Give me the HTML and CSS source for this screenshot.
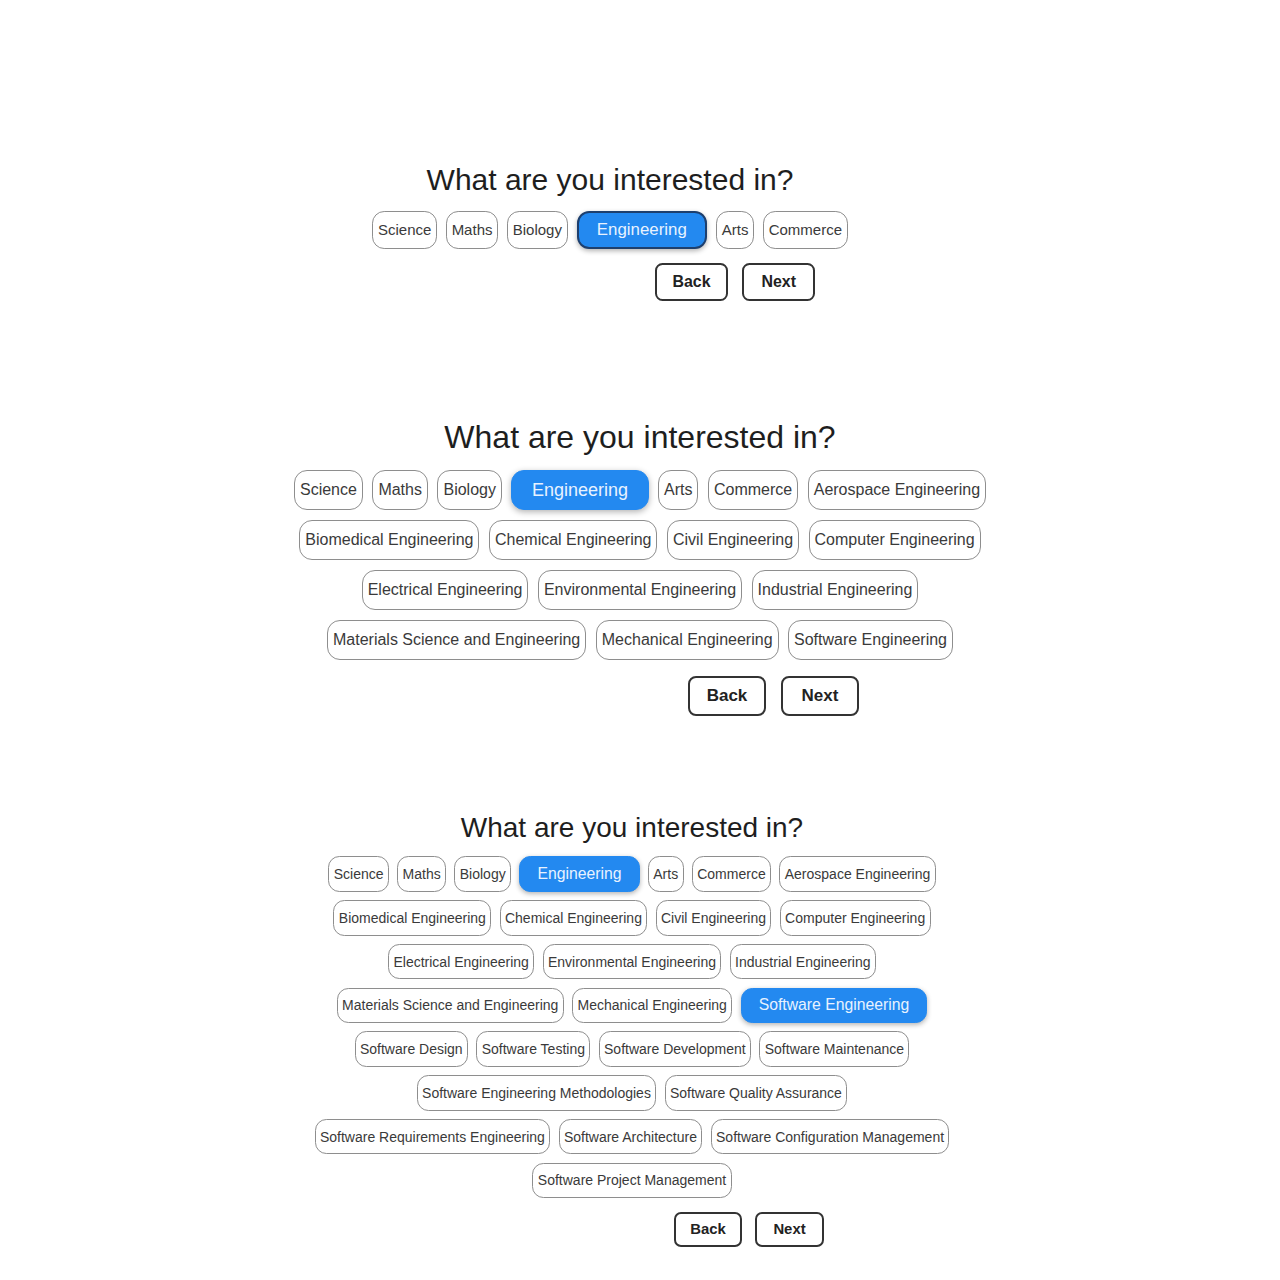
FILE: index.html
```html
<!DOCTYPE html>
<html lang="en">
<head>
<meta charset="utf-8">
<title>Interests</title>
<link rel="stylesheet" href="styles.css">
</head>
<body>
<section class="step step-1">
  <h2 class="title">What are you interested in?</h2>
  <div class="chips">
    <span class="chip">Science</span>
    <span class="chip">Maths</span>
    <span class="chip">Biology</span>
    <span class="chip selected focused">Engineering</span>
    <span class="chip">Arts</span>
    <span class="chip">Commerce</span>
  </div>
  <div class="actions">
    <button class="btn">Back</button>
    <button class="btn">Next</button>
  </div>
</section>

<section class="step step-2">
  <h2 class="title">What are you interested in?</h2>
  <div class="chips">
    <span class="chip">Science</span>
    <span class="chip">Maths</span>
    <span class="chip">Biology</span>
    <span class="chip selected">Engineering</span>
    <span class="chip">Arts</span>
    <span class="chip">Commerce</span>
    <span class="chip">Aerospace Engineering</span>
    <span class="chip">Biomedical Engineering</span>
    <span class="chip">Chemical Engineering</span>
    <span class="chip">Civil Engineering</span>
    <span class="chip">Computer Engineering</span>
    <span class="chip">Electrical Engineering</span>
    <span class="chip">Environmental Engineering</span>
    <span class="chip">Industrial Engineering</span>
    <span class="chip">Materials Science and Engineering</span>
    <span class="chip">Mechanical Engineering</span>
    <span class="chip">Software Engineering</span>
  </div>
  <div class="actions">
    <button class="btn">Back</button>
    <button class="btn">Next</button>
  </div>
</section>

<section class="step step-3">
  <h2 class="title">What are you interested in?</h2>
  <div class="chips">
    <span class="chip">Science</span>
    <span class="chip">Maths</span>
    <span class="chip">Biology</span>
    <span class="chip selected">Engineering</span>
    <span class="chip">Arts</span>
    <span class="chip">Commerce</span>
    <span class="chip">Aerospace Engineering</span>
    <span class="chip">Biomedical Engineering</span>
    <span class="chip">Chemical Engineering</span>
    <span class="chip">Civil Engineering</span>
    <span class="chip">Computer Engineering</span>
    <span class="chip">Electrical Engineering</span>
    <span class="chip">Environmental Engineering</span>
    <span class="chip">Industrial Engineering</span>
    <span class="chip">Materials Science and Engineering</span>
    <span class="chip">Mechanical Engineering</span>
    <span class="chip selected">Software Engineering</span>
    <span class="chip">Software Design</span>
    <span class="chip">Software Testing</span>
    <span class="chip">Software Development</span>
    <span class="chip">Software Maintenance</span>
    <span class="chip">Software Engineering Methodologies</span>
    <span class="chip">Software Quality Assurance</span>
    <span class="chip">Software Requirements Engineering</span>
    <span class="chip">Software Architecture</span>
    <span class="chip">Software Configuration Management</span>
    <span class="chip">Software Project Management</span>
  </div>
  <div class="actions">
    <button class="btn">Back</button>
    <button class="btn">Next</button>
  </div>
</section>
</body>
</html>
```

FILE: styles.css
```css
html, body {
  margin: 0;
  padding: 0;
  background: #ffffff;
}

body {
  font-family: "Liberation Sans", Arial, sans-serif;
  color: #222;
  width: 1280px;
}

.step {
  --k: 1;
  display: flex;
  flex-direction: column;
  align-items: center;
}

.step-1 {
  --k: 0.9375;
  padding: 163px 60px 0 0;
}

.step-2 {
  --k: 1;
  padding: 118px 0 0 0;
}

.step-3 {
  --k: 0.875;
  padding: 96px 16px 0 0;
}

.title {
  margin: 0 0 calc(15px * var(--k)) 0;
  font-size: calc(32px * var(--k));
  line-height: calc(36px * var(--k));
  font-weight: normal;
  color: #1e1e1e;
}

.chips {
  display: flex;
  flex-wrap: wrap;
  justify-content: center;
  gap: calc(9.5px * var(--k));
  max-width: calc(750px * var(--k));
}

.chip {
  box-sizing: border-box;
  display: inline-flex;
  align-items: center;
  height: calc(40.5px * var(--k));
  padding: 0 calc(5px * var(--k));
  border: 1.5px solid #8e8e8e;
  border-radius: calc(13px * var(--k));
  font-size: calc(16px * var(--k));
  color: #3a3a3a;
  background: #fff;
  white-space: nowrap;
}

.chip.selected {
  background: #2389f0;
  border-color: #2389f0;
  color: #e8f2ff;
  font-size: calc(18px * var(--k));
  padding: 0 calc(19.5px * var(--k));
  box-shadow: 0 calc(2px * var(--k)) calc(6px * var(--k)) rgba(0, 0, 0, 0.3);
}

.chip.selected.focused {
  border: 2px solid #1d3f6e;
}

.actions {
  display: flex;
  justify-content: flex-end;
  gap: calc(15px * var(--k));
  width: calc(438px * var(--k));
  margin-top: calc(15.5px * var(--k));
}

.btn {
  box-sizing: border-box;
  width: calc(78px * var(--k));
  height: calc(40px * var(--k));
  padding: 0;
  border: 2px solid #333;
  border-radius: calc(8px * var(--k));
  background: #fff;
  font-family: "Liberation Sans", Arial, sans-serif;
  font-weight: bold;
  font-size: calc(17px * var(--k));
  color: #222;
}
```
